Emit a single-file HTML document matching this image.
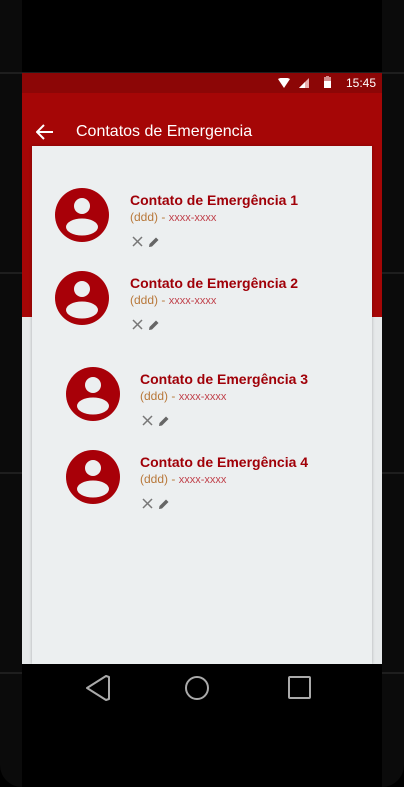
<!DOCTYPE html>
<html><head><style>
*{margin:0;padding:0;box-sizing:border-box}
body{width:404px;height:787px;background:#000;position:relative;overflow:hidden;font-family:"Liberation Sans",Roboto,sans-serif}
.side{position:absolute;top:0;bottom:0;width:22px;background:#0b0b0b}
.ln{position:absolute;height:2px;background:#1e1e1e;left:0;right:0}
.status{position:absolute;left:22px;top:73px;width:360px;height:20px;background:#8c0606}
.bar{position:absolute;left:22px;top:93px;width:360px;height:224px;background:#a50606}
.below{position:absolute;left:22px;top:317px;width:360px;height:347px;background:#e6e9ea}
.card{position:absolute;left:32px;top:146px;width:340px;height:518px;background:#eceff0;box-shadow:0 0 3px rgba(0,0,0,.25)}
.title{position:absolute;left:76px;top:123px;color:#fff;font-size:16px}
.item{position:absolute}
.av{position:absolute;width:54px;height:54px}
.t{position:absolute;font-weight:bold;color:#a00008;font-size:14px;white-space:nowrap}
.s{position:absolute;font-size:12px;color:#b8783a;white-space:nowrap}
.s span{color:#c0404a;font-size:11px}
.ic{position:absolute}
.nav{position:absolute;left:22px;top:664px;width:360px;height:123px;background:#000}
</style></head><body>
<div class="side" style="left:0;border-bottom-left-radius:22px"></div>
<div class="side" style="right:0;border-bottom-right-radius:22px"></div>
<div class="ln" style="top:72px"></div><div class="ln" style="top:272px"></div><div class="ln" style="top:472px"></div><div class="ln" style="top:672px"></div>
<div class="status">
<svg style="position:absolute;left:256px;top:5px" width="12" height="10"><path d="M0 1Q6 -2 12 1L6 10Z" fill="#fff"/></svg>
<svg style="position:absolute;left:277px;top:5px" width="10" height="10"><path d="M10 0V10H0Z" fill="#e8b0b0"/><path d="M6 4V10H0Z" fill="#fff"/></svg>
<svg style="position:absolute;left:302px;top:3px" width="7" height="12"><rect x="0" y="1" width="7" height="11" fill="#d49090"/><rect x="2" y="0" width="3" height="2" fill="#d49090"/><rect x="0" y="5" width="7" height="7" fill="#fff"/></svg>
<div style="position:absolute;left:324px;top:3px;color:#fff;font-size:12px">15:45</div>
</div>
<div class="bar"></div>
<div class="below"></div>
<svg style="position:absolute;left:36px;top:124px" width="18" height="16"><path d="M1 8H17M8 1L1 8L8 15" stroke="#fff" stroke-width="2" fill="none"/></svg>
<div class="title">Contatos de Emergencia</div>
<div class="card"></div>

<div class="item" style="left:55px;top:188px">
<svg class="av" viewBox="0 0 54 54"><circle cx="27" cy="27" r="27" fill="#a80008"/><circle cx="27" cy="18" r="8" fill="#eceff0"/><ellipse cx="27" cy="39" rx="16" ry="8.5" fill="#eceff0"/></svg>
<div class="t" style="left:75px;top:4px">Contato de Emergência 1</div>
<div class="s" style="left:75px;top:22px">(ddd) - <span>xxxx-xxxx</span></div>
<svg class="ic" style="left:77px;top:48px" width="30" height="12"><path d="M1 1L10 10M10 1L1 10" stroke="#777" stroke-width="1.5"/><path d="M17 11L17.5 8L24 1.5L26.5 4L20 10.5Z" fill="#666"/></svg>
</div>
<div class="item" style="left:55px;top:271px">
<svg class="av" viewBox="0 0 54 54"><circle cx="27" cy="27" r="27" fill="#a80008"/><circle cx="27" cy="18" r="8" fill="#eceff0"/><ellipse cx="27" cy="39" rx="16" ry="8.5" fill="#eceff0"/></svg>
<div class="t" style="left:75px;top:4px">Contato de Emergência 2</div>
<div class="s" style="left:75px;top:22px">(ddd) - <span>xxxx-xxxx</span></div>
<svg class="ic" style="left:77px;top:48px" width="30" height="12"><path d="M1 1L10 10M10 1L1 10" stroke="#777" stroke-width="1.5"/><path d="M17 11L17.5 8L24 1.5L26.5 4L20 10.5Z" fill="#666"/></svg>
</div>
<div class="item" style="left:66px;top:367px">
<svg class="av" viewBox="0 0 54 54"><circle cx="27" cy="27" r="27" fill="#a80008"/><circle cx="27" cy="18" r="8" fill="#eceff0"/><ellipse cx="27" cy="39" rx="16" ry="8.5" fill="#eceff0"/></svg>
<div class="t" style="left:74px;top:4px">Contato de Emergência 3</div>
<div class="s" style="left:74px;top:22px">(ddd) - <span>xxxx-xxxx</span></div>
<svg class="ic" style="left:76px;top:48px" width="30" height="12"><path d="M1 1L10 10M10 1L1 10" stroke="#777" stroke-width="1.5"/><path d="M17 11L17.5 8L24 1.5L26.5 4L20 10.5Z" fill="#666"/></svg>
</div>
<div class="item" style="left:66px;top:450px">
<svg class="av" viewBox="0 0 54 54"><circle cx="27" cy="27" r="27" fill="#a80008"/><circle cx="27" cy="18" r="8" fill="#eceff0"/><ellipse cx="27" cy="39" rx="16" ry="8.5" fill="#eceff0"/></svg>
<div class="t" style="left:74px;top:4px">Contato de Emergência 4</div>
<div class="s" style="left:74px;top:22px">(ddd) - <span>xxxx-xxxx</span></div>
<svg class="ic" style="left:76px;top:48px" width="30" height="12"><path d="M1 1L10 10M10 1L1 10" stroke="#777" stroke-width="1.5"/><path d="M17 11L17.5 8L24 1.5L26.5 4L20 10.5Z" fill="#666"/></svg>
</div>

<div class="nav">
<svg style="position:absolute;left:63px;top:10px" width="250" height="30">
<path d="M21 2L24 3V25L21 26L2 14Z" fill="none" stroke="#aaa" stroke-width="2" stroke-linejoin="round"/>
<circle cx="112" cy="14" r="11" fill="none" stroke="#aaa" stroke-width="2"/>
<rect x="204" y="3" width="21" height="21" rx="1" fill="none" stroke="#aaa" stroke-width="2"/>
</svg>
</div>
</body></html>
